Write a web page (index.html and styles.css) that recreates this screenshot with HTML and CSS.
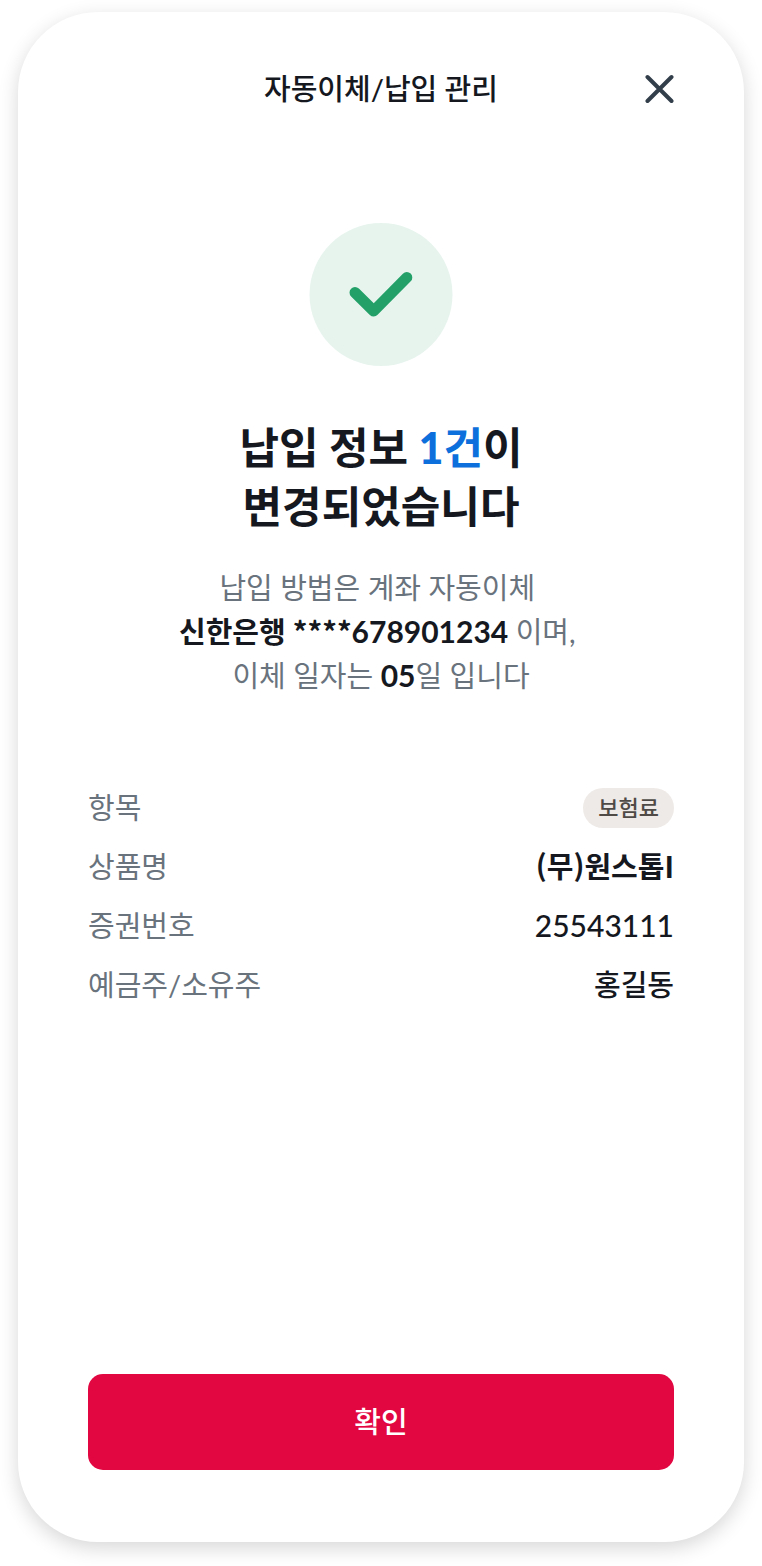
FILE: index.html
```html
<!DOCTYPE html>
<html lang="ko">
<head>
<meta charset="utf-8">
<meta name="viewport" content="width=device-width, initial-scale=1">
<title>자동이체/납입 관리</title>
<link rel="stylesheet" href="styles.css">
</head>
<body>
<main class="screen">
  <header class="header">
    <h1 class="header-title">자동이체/납입 관리</h1>
    <button class="close" type="button" aria-label="닫기">
      <svg width="30" height="30" viewBox="0 0 30 30" fill="none" stroke="currentColor" stroke-width="4" stroke-linecap="round"><path d="M3.500 3 27.500 27M27.500 3 3.500 27"/></svg>
    </button>
  </header>
  <section class="result">
    <svg class="result-icon" width="144" height="144" viewBox="0 0 144 144" fill="none" aria-hidden="true">
      <circle cx="72" cy="71.500" r="71.500" fill="#e7f4ee"/>
      <path d="M46 69.500 64.700 88 97.800 54.500" stroke="#22a068" stroke-width="11" stroke-linecap="round" stroke-linejoin="round"/>
    </svg>
    <h2 class="result-title">납입 정보 <em class="count"><span class="digit">1</span>건</em>이<br>변경되었습니다</h2>
    <p class="result-text">납입 방법은 계좌 자동이체&nbsp;<br><strong>신한은행 <span class="korean">****</span><span class="number">678901234</span></strong> 이며,&nbsp;<br>이체 일자는 <strong class="number">05</strong>일 입니다</p>
  </section>
  <dl class="details">
    <div class="row"><dt>항목</dt><dd><span class="badge">보험료</span></dd></div>
    <div class="row"><dt>상품명</dt><dd class="strong"><span class="korean">(무)원스톱I</span></dd></div>
    <div class="row"><dt>증권번호</dt><dd><span class="number">25543111</span></dd></div>
    <div class="row"><dt>예금주/소유주</dt><dd>홍길동</dd></div>
  </dl>
  <button class="confirm" type="button">확인</button>
</main>
</body>
</html>
```
FILE: styles.css
```css
* {
  box-sizing: border-box;
}

body {
  margin: 0;
  min-height: 100vh;
  display: flex;
  padding: 12px 18px 24px;
  background: #fff;
  color: #15181e;
  font: 400 29px/44px Lato, "Noto Sans CJK KR", sans-serif;
}

.screen {
  flex: 1;
  display: flex;
  flex-direction: column;
  padding: 55px 70px 72px;
  border-radius: 80px;
  background: #fff;
  box-shadow: 0 6px 20px rgba(0, 0, 0, 0.16);
}

.header {
  display: grid;
  grid-template-columns: 30px 1fr 30px;
  align-items: center;
}

.header-title {
  grid-column: 2;
  margin: 0;
  font-size: 29px;
  font-weight: 500;
  text-align: center;
}

.close {
  display: flex;
  padding: 0;
  border: 0;
  background: none;
  color: #323e4a;
}

.result {
  display: flex;
  flex-direction: column;
  align-items: center;
  padding-top: 112px;
  text-align: center;
}

.result-title {
  margin: 51px 0 0;
  font-size: 43px;
  font-weight: 700;
  line-height: 59px;
}

.count {
  color: #0c6fdb;
  font-style: normal;
}

.digit {
  font-weight: 900;
}

.result-text {
  margin: 30px 0 0;
  color: #69737d;
}

.result-text strong {
  color: #15181e;
  font-weight: 700;
}

.number {
  font-size: 30px;
  line-height: 1;
}

.korean {
  font-family: "Noto Sans CJK KR", sans-serif;
  line-height: 1;
}

.details {
  display: flex;
  flex-direction: column;
  gap: 15px;
  margin: 88px 0 48px;
}

.row {
  display: flex;
  justify-content: space-between;
  align-items: center;
  height: 44px;
}

.row dt {
  color: #69737d;
}

.row dd {
  margin: 0;
  font-weight: 500;
}

.row .strong {
  font-weight: 700;
}

.badge {
  display: block;
  padding: 0 15px;
  border-radius: 20px;
  background: #eeeae7;
  color: #4f4a46;
  font-size: 22px;
  line-height: 40px;
}

.confirm {
  margin-top: auto;
  padding: 26px;
  border: 0;
  border-radius: 15px;
  background: #e20741;
  color: #fff;
  font: inherit;
  font-weight: 500;
}
```
